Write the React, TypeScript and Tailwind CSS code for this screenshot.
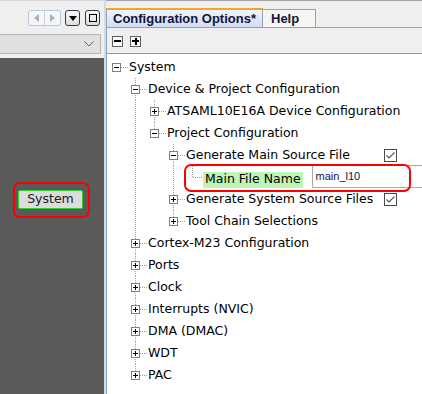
import React from 'react';

type Row = {
  label: string;
  level: number;
  exp?: '+' | '-';
  check?: boolean;
  input?: string;
};

const rows: Row[] = [
  { label: 'System', level: 0, exp: '-' },
  { label: 'Device & Project Configuration', level: 1, exp: '-' },
  { label: 'ATSAML10E16A Device Configuration', level: 2, exp: '+' },
  { label: 'Project Configuration', level: 2, exp: '-' },
  { label: 'Generate Main Source File', level: 3, exp: '-', check: true },
  { label: 'Main File Name', level: 4, input: 'main_l10' },
  { label: 'Generate System Source Files', level: 3, exp: '+', check: true },
  { label: 'Tool Chain Selections', level: 3, exp: '+' },
  { label: 'Cortex-M23 Configuration', level: 1, exp: '+' },
  { label: 'Ports', level: 1, exp: '+' },
  { label: 'Clock', level: 1, exp: '+' },
  { label: 'Interrupts (NVIC)', level: 1, exp: '+' },
  { label: 'DMA (DMAC)', level: 1, exp: '+' },
  { label: 'WDT', level: 1, exp: '+' },
  { label: 'PAC', level: 1, exp: '+' },
];

const hasNext = (i: number) => {
  const l = rows[i].level;
  for (let j = i + 1; j < rows.length; j++) {
    if (rows[j].level < l) return false;
    if (rows[j].level === l) return true;
  }
  return false;
};

const ancestorHasNext = (i: number, d: number) => {
  for (let k = i - 1; k >= 0; k--) {
    if (rows[k].level === d) return hasNext(k);
  }
  return false;
};

const Gutter: React.FC<{ i: number }> = ({ i }) => {
  const { level: L, exp } = rows[i];
  const w = exp ? 22 + 19 * L : 20 + 19 * L;
  const cx = 19 * L + 9.5;
  const dot = { stroke: '#a0a0a0', strokeWidth: 1, strokeDasharray: '1 1' };
  return (
    <svg width={w} height={22} className="shrink-0" shapeRendering="crispEdges">
      {Array.from({ length: Math.max(0, L - 1) }, (_, k) => k + 1).map((d) =>
        ancestorHasNext(i, d) ? <line key={d} x1={19 * d + 9.5} y1={0} x2={19 * d + 9.5} y2={22} {...dot} /> : null
      )}
      {L >= 1 && <line x1={cx} y1={0} x2={cx} y2={11.5} {...dot} />}
      {L >= 1 && hasNext(i) && <line x1={cx} y1={11} x2={cx} y2={22} {...dot} />}
      <line x1={cx} y1={11.5} x2={w} y2={11.5} {...dot} />
      {exp && (
        <g>
          <rect x={19 * L + 5.5} y={7.5} width={8} height={8} fill="#fff" stroke="#7f7f7f" />
          <line x1={19 * L + 7} y1={11.5} x2={19 * L + 12} y2={11.5} stroke="#000" />
          {exp === '+' && <line x1={cx} y1={9} x2={cx} y2={14} stroke="#000" />}
        </g>
      )}
    </svg>
  );
};

const CheckBox = () => (
  <span className="ml-auto mr-[25px] flex h-[13px] w-[13px] shrink-0 items-center justify-center border border-[#4a4a4a] bg-white">
    <svg width="11" height="11" viewBox="0 0 11 11">
      <polyline points="1.5,5.5 4,8 9.5,2.5" fill="none" stroke="#5a5a5a" strokeWidth="1.2" />
    </svg>
  </span>
);

const TreeRow: React.FC<{ i: number }> = ({ i }) => {
  const r = rows[i];
  if (r.input !== undefined) {
    return (
      <div className="flex h-[22px] items-center">
        <Gutter i={i} />
        <div className="h-[16px] self-end bg-[#c0f4b6] px-[2px] text-[12.5px] leading-[13px] whitespace-nowrap text-black">
          {r.label}
        </div>
        <div className="ml-[9px] flex h-[23px] flex-1 items-center self-start -mt-[1px] border-y border-l border-[#a9a9a9] bg-white pl-[3px] font-['Liberation_Sans',sans-serif] text-[11px] text-[#10105a]">
          {r.input}
        </div>
      </div>
    );
  }
  return (
    <div className="flex h-[22px] items-center">
      <Gutter i={i} />
      <span className="text-[12.5px] whitespace-nowrap text-black">{r.label}</span>
      {r.check && <CheckBox />}
    </div>
  );
};

const NavButtons = () => (
  <div className="flex items-center pl-[28px] pt-[9px]">
    <div className="flex h-[16px] w-[33px] rounded-[3px] border border-[#b6c8da] bg-[#f4f6f8]">
      <div className="flex flex-1 items-center justify-center border-r border-[#c8d4e0]">
        <svg width="5" height="8"><polygon points="5,0 0,4 5,8" fill="#b0b0b0" /></svg>
      </div>
      <div className="flex flex-1 items-center justify-center">
        <svg width="5" height="8"><polygon points="0,0 5,4 0,8" fill="#b0b0b0" /></svg>
      </div>
    </div>
    <div className="ml-[4px] flex h-[16px] w-[15px] items-center justify-center rounded-[3px] border border-[#2b3b4e] bg-gradient-to-b from-[#fafafa] to-[#dedede]">
      <svg width="8" height="5"><polygon points="0,0 8,0 4,5" fill="#000" /></svg>
    </div>
    <div className="ml-[5px] flex h-[16px] w-[15px] items-center justify-center rounded-[3px] border border-[#2b3b4e] bg-gradient-to-b from-[#fafafa] to-[#dedede]">
      <div className="h-[8px] w-[8px] border border-black" />
    </div>
  </div>
);

export default function App() {
  return (
    <div className="relative flex h-[394px] w-[422px] overflow-hidden bg-[#efefef] font-['DejaVu_Sans',sans-serif]">
      {/* left panel */}
      <div className="flex w-[104px] shrink-0 flex-col border-t border-[#d6d6d6]">
        <div className="relative h-[57px] shrink-0">
          <NavButtons />
          <div className="mt-[8px] flex h-[20px] w-[101px] items-center justify-end border-y border-r border-[#b4b4b4] bg-[#e0e0e0] pr-[6px]">
            <svg width="10" height="6"><polyline points="0.5,0.5 5,5 9.5,0.5" fill="none" stroke="#606060" /></svg>
          </div>
        </div>
        <div className="flex-1 bg-[#5a5a5a] pl-[18px] pt-[132px]">
          <div className="flex h-[19px] w-[65px] items-center justify-center rounded-[2px] border border-[#30d030] bg-[#dcdcdc] text-[12.5px] text-[#202020]">
            System
          </div>
        </div>
      </div>
      {/* divider */}
      <div className="w-[2px] shrink-0 bg-[#cfdcea]" />
      {/* right panel */}
      <div className="flex flex-1 flex-col border-t border-[#a4a4a4]">
        <div className="flex h-[27px] shrink-0 items-end border-b border-[#8fa3b8] pt-[7px]">
          <div className="flex h-[19px] w-[157px] items-center border-x border-t-2 border-x-[#8fa3b8] border-t-[#f2a52a] bg-gradient-to-b from-[#f0f4fc] to-[#d2ddf4] pl-[6px] font-['Liberation_Sans',sans-serif] text-[13px] font-bold text-[#14143a]">
            Configuration Options*
          </div>
          <div className="flex h-[18px] w-[53px] items-center border-r border-t border-[#8fa3b8] bg-[#f6f6f0] pl-[8px] font-['Liberation_Sans',sans-serif] text-[13px] font-bold text-[#14143a]">
            Help
          </div>
        </div>
        <div className="flex h-[26px] shrink-0 items-center gap-[7px] border-b border-l border-b-[#999999] border-l-[#8fa3b8] pl-[5px] pt-[1px]">
          <div className="flex h-[11px] w-[11px] items-center justify-center border border-[#606060] bg-[#fafafa]">
            <div className="h-[2px] w-[7px] bg-black" />
          </div>
          <div className="relative flex h-[11px] w-[11px] items-center justify-center border border-[#606060] bg-[#fafafa]">
            <div className="h-[2px] w-[7px] bg-black" />
            <div className="absolute h-[7px] w-[2px] bg-black" />
          </div>
        </div>
        <div className="flex-1 border-l border-[#8fa3b8] bg-white pt-[2px]">
          {rows.map((_, i) => (
            <TreeRow key={i} i={i} />
          ))}
        </div>
      </div>

      {/* annotation outlines */}
      <div className="pointer-events-none absolute left-[13px] top-[182px] h-[36px] w-[77px] rounded-[7px] border-2 border-[#ff0000]" />
      <div className="pointer-events-none absolute left-[184px] top-[164px] h-[28px] w-[227px] rounded-[7px] border-2 border-[#ff0000]" />
    </div>
  );
}
